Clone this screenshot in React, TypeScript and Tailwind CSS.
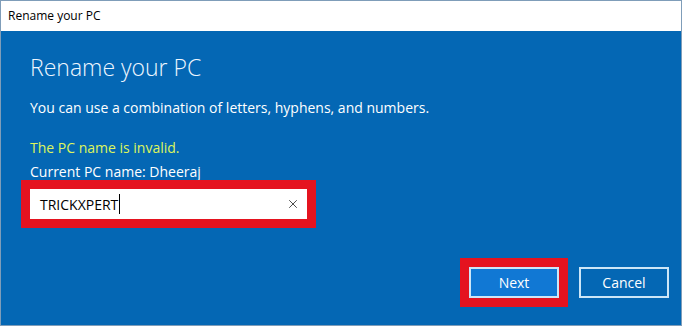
import { X } from 'lucide-react';

export default function App() {
  return (
    <div className="w-[682px] h-[326px] flex flex-col bg-[#0467b4] border border-[#7f9db9] overflow-hidden" style={{ fontFamily: '"Open Sans", "Noto Sans", sans-serif' }}>
      <div className="h-[30px] shrink-0 bg-white flex items-center pl-[7px] text-[12px] text-black">
        Rename your PC
      </div>
      <div className="flex-1 flex flex-col pl-[29px] pr-[12px] text-white">
        <h1 className="mt-[20px] text-[23px] font-light leading-[32px] text-[#eef6ff]">Rename your PC</h1>
        <p className="mt-[15px] text-[14px] leading-[20px]">You can use a combination of letters, hyphens, and numbers.</p>
        <p className="mt-[20px] text-[14px] leading-[20px] text-[#def55c]">The PC name is invalid.</p>
        <p className="mt-[5px] text-[14px] leading-[18px]">Current PC name: Dheeraj</p>
        <div className="-mt-[1px] -ml-[9px] w-[295px] h-[48px] border-[9px] border-[#e5131f] bg-white flex items-center">
          <span className="ml-[10px] text-[14px] text-black">TRICKXPERT</span>
          <span className="ml-[1px] w-px h-[20px] bg-black" />
          <X className="ml-auto mr-[7px] w-[14px] h-[14px] text-[#333]" strokeWidth={1.5} />
        </div>
        <div className="mt-auto mb-[18px] flex justify-end items-center">
          <div className="border-[9px] border-[#e5131f]">
            <div className="w-[90px] h-[31px] bg-[#1178d4] border-2 border-[#cde6f7] flex items-center justify-center text-[14px] text-white">
              Next
            </div>
          </div>
          <div className="ml-[11px] w-[90px] h-[31px] border-2 border-[#cde6f7] flex items-center justify-center text-[14px] text-white">
            Cancel
          </div>
        </div>
      </div>
    </div>
  );
}
